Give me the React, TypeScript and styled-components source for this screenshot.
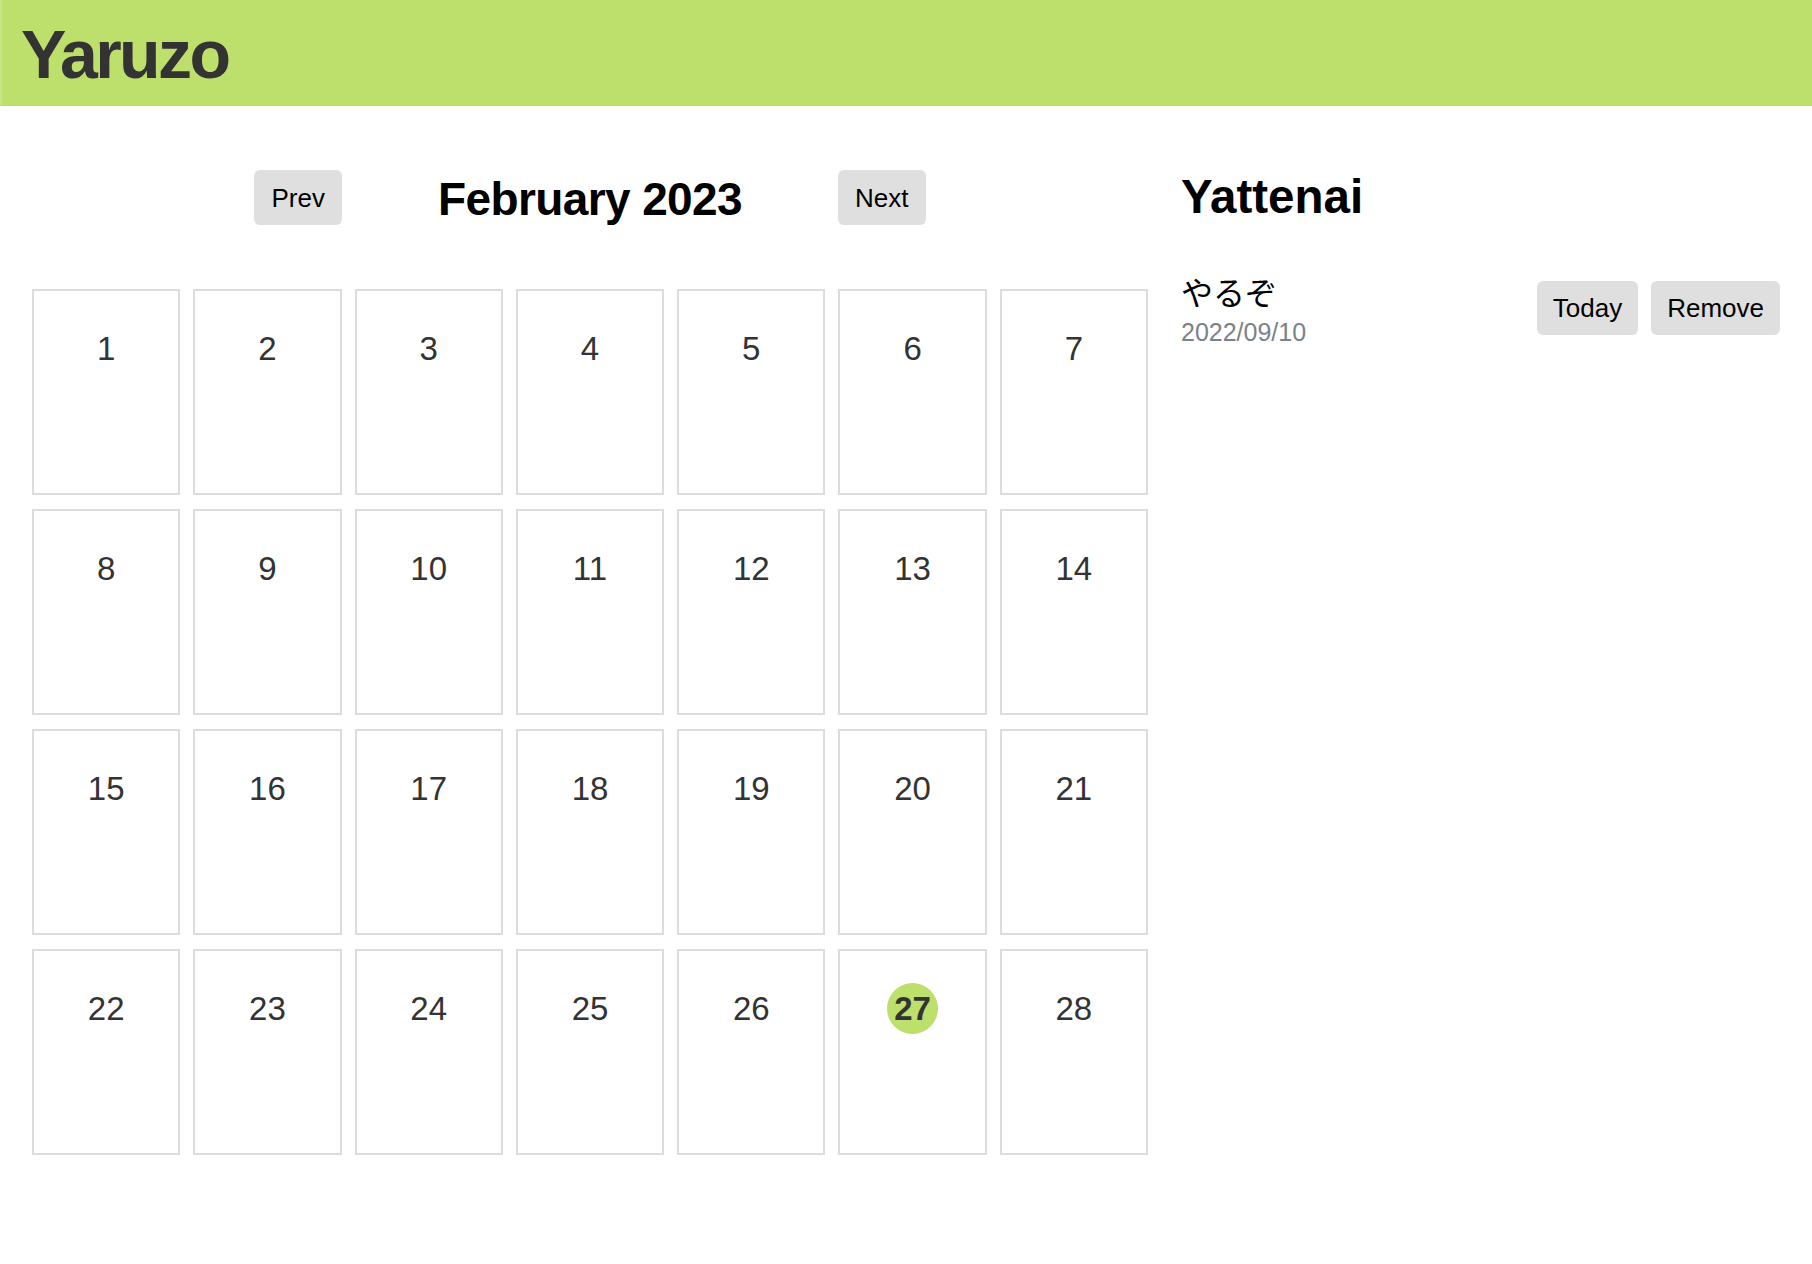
import React from 'react';
import styled, { createGlobalStyle } from 'styled-components';

const GlobalStyle = createGlobalStyle`
  body {
    margin: 0;
    background: #fff;
    font-family: "Liberation Sans", Arial, "Noto Sans CJK JP", sans-serif;
    color: #000;
  }
`;

const days = Array.from({ length: 28 }, (_, i) => i + 1);
const TODAY = 27;

const tasks = [{ id: 1, title: 'やるぞ', date: '2022/09/10' }];

const App = () => {
  return (
    <>
      <GlobalStyle />
      <Header>
        <Logo>Yaruzo</Logo>
      </Header>
      <Main>
        <CalendarColumn>
          <MonthNav>
            <Button>Prev</Button>
            <MonthTitle>February 2023</MonthTitle>
            <Button>Next</Button>
          </MonthNav>
          <DayGrid>
            {days.map((d) => (
              <DayCell key={d}>
                <DayNumber $today={d === TODAY}>{d}</DayNumber>
              </DayCell>
            ))}
          </DayGrid>
        </CalendarColumn>
        <TaskColumn>
          <PanelTitle>Yattenai</PanelTitle>
          {tasks.map((t) => (
            <TaskRow key={t.id}>
              <TaskInfo>
                <TaskName>{t.title}</TaskName>
                <TaskDate>{t.date}</TaskDate>
              </TaskInfo>
              <TaskActions>
                <Button $small>Today</Button>
                <Button $small>Remove</Button>
              </TaskActions>
            </TaskRow>
          ))}
        </TaskColumn>
      </Main>
    </>
  );
};

export default App;

const Header = styled.header`
  display: flex;
  align-items: center;
  height: 106px;
  box-sizing: border-box;
  padding: 2px 0 0 19px;
  background-color: #bddf6b;
  border-left: 2px solid #c7e489;
`;

const Logo = styled.h1`
  margin: 0;
  font-size: 68px;
  font-weight: 700;
  letter-spacing: -2.6px;
  line-height: 1.15;
  color: #333;
`;

const Main = styled.main`
  display: flex;
  gap: 33px;
  padding: 0 32px;
`;

const CalendarColumn = styled.section`
  display: flex;
  flex-direction: column;
  width: 1116px;
  flex-shrink: 0;
`;

const MonthNav = styled.div`
  display: flex;
  justify-content: center;
  align-items: flex-start;
  gap: 96px;
  margin-top: 64px;
`;

const MonthTitle = styled.h2`
  margin: 3px 0 0;
  font-size: 46px;
  font-weight: 700;
  letter-spacing: -0.6px;
  line-height: 53px;
`;

const Button = styled.button<{ $small?: boolean }>`
  height: ${(p) => (p.$small ? '54px' : '55px')};
  padding: 0 ${(p) => (p.$small ? '16px' : '17px')};
  border: none;
  border-radius: 6px;
  background-color: #dfdfdf;
  color: #000;
  font-family: "Liberation Sans", Arial, sans-serif;
  font-size: 26px;
  line-height: 30px;
  cursor: pointer;
`;

const DayGrid = styled.div`
  display: grid;
  grid-template-columns: repeat(7, 1fr);
  grid-auto-rows: 206px;
  gap: 14px 13px;
  margin-top: 63px;
`;

const DayCell = styled.div`
  display: flex;
  flex-direction: column;
  align-items: center;
  box-sizing: border-box;
  padding-top: 32px;
  border: 2px solid #dcdcdc;
`;

const DayNumber = styled.span<{ $today?: boolean }>`
  display: inline-block;
  width: 51px;
  height: 51px;
  border-radius: 50%;
  text-align: center;
  line-height: 51px;
  font-size: 33px;
  color: #333;
  font-weight: ${(p) => (p.$today ? 700 : 400)};
  background-color: ${(p) => (p.$today ? '#bddf6b' : 'transparent')};
`;

const TaskColumn = styled.aside`
  flex: 1;
  display: flex;
  flex-direction: column;
  padding-top: 64px;
`;

const PanelTitle = styled.h2`
  margin: 0;
  font-size: 47.5px;
  font-weight: 700;
  line-height: 54px;
`;

const TaskRow = styled.div`
  display: flex;
  justify-content: space-between;
  align-items: flex-start;
  margin-top: 47px;
`;

const TaskInfo = styled.div`
  display: flex;
  flex-direction: column;
`;

const TaskName = styled.span`
  font-family: "Noto Sans CJK JP", "Liberation Sans", sans-serif;
  font-size: 32px;
  line-height: 40px;
`;

const TaskDate = styled.span`
  margin-top: 6px;
  font-size: 25px;
  line-height: 30px;
  color: #7b8286;
`;

const TaskActions = styled.div`
  display: flex;
  gap: 13px;
  margin-top: 10px;
`;
